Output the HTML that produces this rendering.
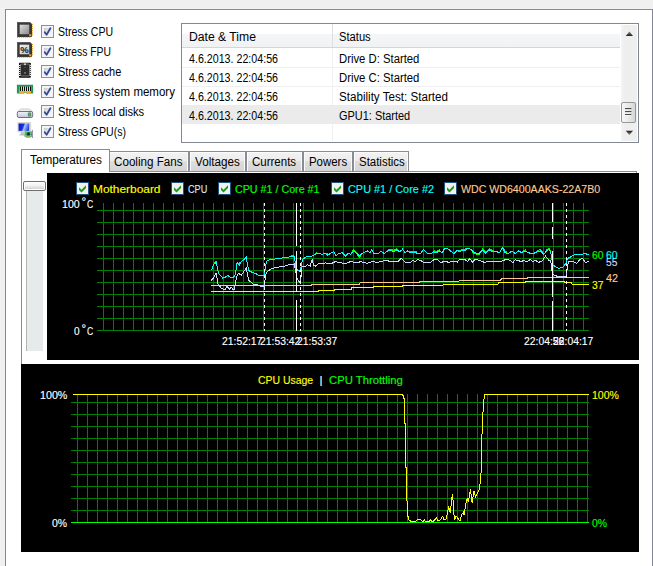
<!DOCTYPE html>
<html><head><meta charset="utf-8"><title>System Stability Test</title>
<style>
html,body{margin:0;padding:0}
body{width:653px;height:566px;overflow:hidden;background:#f0f0f0;position:relative;font-family:"Liberation Sans", sans-serif;font-size:12px}
.abs{position:absolute;display:block}
.t{position:absolute;white-space:pre;line-height:12px;transform-origin:0 0;display:block}
.panel{position:absolute;left:5px;top:9px;width:646px;height:600px;background:#fff;border:1px solid #848894}
.hl{position:absolute;left:0;top:8px;width:653px;height:1px;background:#f4f4f4}
.cb{position:absolute;width:11px;height:11px;border:1px solid #8e8f8f;background:#f4f4f4;box-shadow:inset 0 0 0 1px #f4f4f4}
.cb:before{content:"";position:absolute;left:2px;top:2px;width:7px;height:7px;background:linear-gradient(135deg,#c6cacf,#e6e8eb 55%,#f8f8f8);}
.cb svg{position:absolute;left:-1px;top:-1px}
.ccb{position:absolute;width:11px;height:11px;border:1px solid #1c5180;background:#f1f1ed}
.ccb svg{position:absolute;left:-1px;top:-1px}
.list{position:absolute;left:181px;top:23px;width:456px;height:118px;border:1px solid #828790;background:#fff}
.hdr{position:absolute;left:182px;top:24px;width:438px;height:23px;background:linear-gradient(#fff 0,#fff 42%,#f5f6f8 43%,#f1f2f4 100%);border-bottom:1px solid #d5d5d5}
.tab{position:absolute;top:151px;height:19px;border:1px solid #898c95;border-bottom:none;box-shadow:inset 1px 1px 0 #fbfbfb,inset -1px 0 0 #fbfbfb;background:linear-gradient(#f3f3f3 0,#ececec 47%,#dedede 48%,#d5d5d5 100%)}
</style></head><body>
<div class="hl"></div>
<div class="panel"></div>
<svg class="abs" style="left:17px;top:22px" width="17" height="17" viewBox="0 0 17 17"><defs><linearGradient id="cg0" x1="0" y1="0" x2="1" y2="1"><stop offset="0" stop-color="#dedede"/><stop offset="1" stop-color="#8a8a8a"/></linearGradient></defs><path d="M0 0H13L14.8 1.8V14.8H0z" fill="#3a3a3a"/><path d="M0.5 14.8V0.5H13" stroke="#5c5c5c" stroke-width="1" fill="none"/><path d="M14.3 2.2V14.3H0.8" stroke="#242424" stroke-width="1" fill="none"/><rect x="2.7" y="2.7" width="9.5" height="9.5" fill="url(#cg0)"/><rect x="12.2" y="12.2" width="2.1" height="2.1" fill="#f0a020"/><path d="M14.8 2.4h1.2M14.8 4.6h1.2M14.8 6.7h1.2M14.8 8.8h1.2M14.8 10.9h1.2M14.8 12.9h1.2" stroke="#d89418" stroke-width="1"/><path d="M0.6 14.8v1.1M2.7 14.8v1.1M4.8 14.8v1.1M6.8 14.8v1.1M8.8 14.8v1.1M10.8 14.8v1.1M12.9 14.8v1.1" stroke="#d89418" stroke-width="1"/></svg><svg class="abs" style="left:17px;top:42px" width="17" height="17" viewBox="0 0 17 17"><defs><linearGradient id="cg1" x1="0" y1="0" x2="1" y2="1"><stop offset="0" stop-color="#f4f4f4"/><stop offset="1" stop-color="#c4c4c4"/></linearGradient></defs><path d="M0 0H13L14.8 1.8V14.8H0z" fill="#3a3a3a"/><path d="M0.5 14.8V0.5H13" stroke="#5c5c5c" stroke-width="1" fill="none"/><path d="M14.3 2.2V14.3H0.8" stroke="#242424" stroke-width="1" fill="none"/><rect x="2.7" y="2.7" width="9.5" height="9.5" fill="url(#cg1)"/><rect x="12.2" y="12.2" width="2.1" height="2.1" fill="#f0a020"/><path d="M14.8 2.4h1.2M14.8 4.6h1.2M14.8 6.7h1.2M14.8 8.8h1.2M14.8 10.9h1.2M14.8 12.9h1.2" stroke="#d89418" stroke-width="1"/><path d="M0.6 14.8v1.1M2.7 14.8v1.1M4.8 14.8v1.1M6.8 14.8v1.1M8.8 14.8v1.1M10.8 14.8v1.1M12.9 14.8v1.1" stroke="#d89418" stroke-width="1"/><text x="7.4" y="11" font-family="Liberation Sans, sans-serif" font-size="9.5" font-weight="bold" text-anchor="middle" fill="#111">%</text></svg><svg class="abs" style="left:17px;top:62px" width="16" height="17" viewBox="0 0 16 17"><rect x="2" y="0.8" width="11.8" height="15" rx="0.8" fill="#0c0c0c"/><path d="M0.9 3.5H15M0.9 5.5H15M0.9 7.5H15M0.9 9.5H15M0.9 11.5H15M0.9 13.5H15" stroke="#e6ecf8" stroke-width="1"/><rect x="3.4" y="2" width="9.2" height="12" rx="0.6" fill="#2c2c2c" stroke="#a4a4a4" stroke-width="0.7"/><circle cx="8" cy="2.2" r="1" fill="#d8d8d8"/><rect x="7.3" y="5" width="1.4" height="1" fill="#555"/><rect x="7.2" y="10" width="1.7" height="1.7" fill="#7c7c7c"/></svg><svg class="abs" style="left:16px;top:84px" width="18" height="10" viewBox="0 0 18 10"><path d="M0.9 0.8H17.1V9.6H10.4L9.9 8.6H8.7L8.2 9.6H0.9z" fill="#1f9c50"/><rect x="3.6" y="2.6" width="11.6" height="4.6" fill="#e8f2ea"/><path d="M4.5 2.4v4.8M6.5 2.4v4.8M8.5 2.4v4.8M10.5 2.4v4.8M12.5 2.4v4.8M14.5 2.4v4.8" stroke="#0c0c0c" stroke-width="1.1"/><path d="M3.2 7H15V8.9H10.6L10 7.9H8.6L8 8.9H3.2z" fill="#f2b01c"/></svg><svg class="abs" style="left:16px;top:108px" width="18" height="11" viewBox="0 0 18 11"><defs><linearGradient id="dg" x1="0" y1="0" x2="0" y2="1"><stop offset="0" stop-color="#f4f4fb"/><stop offset="1" stop-color="#c2c4dc"/></linearGradient></defs><path d="M5.2 0.9H12.8Q14.6 1.1 16.3 3.8H1.7Q3.4 1.1 5.2 0.9z" fill="#ececf0" stroke="#b8bac0" stroke-width="0.6"/><rect x="1.3" y="3.5" width="15.4" height="6" rx="1.6" fill="url(#dg)" stroke="#62666e" stroke-width="0.9"/><rect x="11.9" y="4.4" width="3.3" height="4.2" rx="0.8" fill="#686c74"/><rect x="12.4" y="4.9" width="2.1" height="3.2" fill="#2ecc2e"/></svg><svg class="abs" style="left:17px;top:122px" width="17" height="17" viewBox="0 0 17 17"><defs><linearGradient id="mg" x1="0" y1="0" x2="1" y2="0.25"><stop offset="0" stop-color="#0010d0"/><stop offset="0.5" stop-color="#1838e0"/><stop offset="0.62" stop-color="#b0c4f8"/><stop offset="0.8" stop-color="#7090f0"/><stop offset="1" stop-color="#2850e0"/></linearGradient></defs><rect x="0.4" y="0.1" width="13.8" height="10.2" rx="0.6" fill="#dcd8cc"/><rect x="1.6" y="1.5" width="10.6" height="7.4" fill="url(#mg)"/><path d="M3.6 10.3h3.4v2.2h1v1.1H2.4v-1.1h1.2z" fill="#c0beb6"/><rect x="7.6" y="9.6" width="7.3" height="5.1" fill="#1e9850"/><rect x="10.4" y="10.8" width="2.2" height="2.2" fill="#181818"/><path d="M8.4 10.6h1v1h-1zM8.4 12.8h1v1h-1zM13.2 10.6h1v1h-1zM13.2 12.8h1v1h-1z" fill="#e8f4ea"/><path d="M9 14.7h4.6v1.3H9z" fill="#f2b01c"/><path d="M15.4 7.9V16" stroke="#7a8088" stroke-width="0.9"/></svg>
<div class="cb" style="left:41px;top:25px"><svg width="13" height="13" viewBox="0 0 13 13"><path d="M3.7 7.2L5.6 9.7L9.4 3.3" stroke="#36489a" stroke-width="1.8" fill="none" stroke-linecap="round" stroke-linejoin="round"/></svg></div>
<div class="cb" style="left:41px;top:45px"><svg width="13" height="13" viewBox="0 0 13 13"><path d="M3.7 7.2L5.6 9.7L9.4 3.3" stroke="#36489a" stroke-width="1.8" fill="none" stroke-linecap="round" stroke-linejoin="round"/></svg></div>
<div class="cb" style="left:41px;top:65px"><svg width="13" height="13" viewBox="0 0 13 13"><path d="M3.7 7.2L5.6 9.7L9.4 3.3" stroke="#36489a" stroke-width="1.8" fill="none" stroke-linecap="round" stroke-linejoin="round"/></svg></div>
<div class="cb" style="left:41px;top:85px"><svg width="13" height="13" viewBox="0 0 13 13"><path d="M3.7 7.2L5.6 9.7L9.4 3.3" stroke="#36489a" stroke-width="1.8" fill="none" stroke-linecap="round" stroke-linejoin="round"/></svg></div>
<div class="cb" style="left:41px;top:105px"><svg width="13" height="13" viewBox="0 0 13 13"><path d="M3.7 7.2L5.6 9.7L9.4 3.3" stroke="#36489a" stroke-width="1.8" fill="none" stroke-linecap="round" stroke-linejoin="round"/></svg></div>
<div class="cb" style="left:41px;top:125px"><svg width="13" height="13" viewBox="0 0 13 13"><path d="M3.7 7.2L5.6 9.7L9.4 3.3" stroke="#36489a" stroke-width="1.8" fill="none" stroke-linecap="round" stroke-linejoin="round"/></svg></div>
<div class="list"></div><div class="hdr"></div>
<div class="abs" style="left:332px;top:24px;width:1px;height:23px;background:#dedfe1"></div>
<div class="abs" style="left:332px;top:48px;width:1px;height:93px;background:#f0f0f0"></div>
<div class="abs" style="left:182px;top:105px;width:438px;height:19px;background:#ebebeb"></div>
<div class="abs" style="left:182px;top:67px;width:438px;height:1px;background:#efefef"></div>
<div class="abs" style="left:182px;top:86px;width:438px;height:1px;background:#efefef"></div>
<div class="abs" style="left:621px;top:25px;width:16px;height:116px;background:linear-gradient(90deg,#f4f4f4,#eeeeee 25%,#efefef)"></div>
<svg class="abs" style="left:621px;top:24px" width="17" height="118" viewBox="0 0 17 118"><defs><linearGradient id="ag" x1="0" y1="0" x2="0" y2="1"><stop offset="0" stop-color="#8a8a8a"/><stop offset="1" stop-color="#1c1c1c"/></linearGradient><linearGradient id="ag2" x1="0" y1="0" x2="0" y2="1"><stop offset="0" stop-color="#1c1c1c"/><stop offset="1" stop-color="#8a8a8a"/></linearGradient></defs><path d="M4.8 12L8.4 7.6L12 12z" fill="url(#ag)"/><path d="M4.8 106.8L8.4 111L12 106.8z" fill="url(#ag2)"/></svg>
<div class="abs" style="left:621px;top:102px;width:13px;height:19px;border:1px solid #979797;border-radius:2px;background:linear-gradient(90deg,#f6f6f6,#e9e9e9 50%,#d6d6d6)"></div>
<svg class="abs" style="left:624px;top:107px" width="9" height="9" viewBox="0 0 9 9"><path d="M1 1.7H7.4M1 4.6H7.4M1 7.5H7.4" stroke="#4a4a4a" stroke-width="1.2"/><path d="M1 2.7H7.4M1 5.6H7.4M1 8.5H7.4" stroke="#fafafa" stroke-width="0.8" opacity="0.7"/></svg>
<div class="abs" style="left:21px;top:171px;width:615px;height:193px;border-left:1px solid #898c95;border-top:1px solid #898c95"></div>
<div class="abs" style="left:636px;top:171px;width:1px;height:2px;background:#898c95"></div>
<div class="tab" style="left:108px;width:79px"></div>
<div class="tab" style="left:189px;width:55px"></div>
<div class="tab" style="left:246px;width:55px"></div>
<div class="tab" style="left:303px;width:48px"></div>
<div class="tab" style="left:353px;width:54px"></div>
<div class="abs" style="left:21px;top:149px;width:87px;height:22px;border:1px solid #898c95;border-bottom:none;background:#fff"></div>
<div class="abs" style="left:26px;top:185px;width:16px;height:166px;background:#e7eaea;border-left:1px solid #b4b4b4"></div>
<div class="abs" style="left:23px;top:181px;width:21px;height:8px;border:1px solid #707070;border-radius:2px;background:linear-gradient(#fdfdfd 0,#f2f2f2 45%,#d8d8d8 80%,#e2e2e2 100%);box-shadow:inset 0 0 0 1px #fff"></div>
<svg class="abs" style="left:47px;top:173px" width="592" height="187" viewBox="47 173 592 187"><rect x="47" y="173" width="592" height="187" fill="#000"/><g stroke="#008000" stroke-width="1" shape-rendering="crispEdges"><path d="M103.5 203V331M113.5 203V331M123.5 203V331M133.5 203V331M143.5 203V331M153.5 203V331M163.5 203V331M173.5 203V331M183.5 203V331M193.5 203V331M203.5 203V331M213.5 203V331M223.5 203V331M233.5 203V331M243.5 203V331M253.5 203V331M263.5 203V331M273.5 203V331M283.5 203V331M293.5 203V331M303.5 203V331M313.5 203V331M323.5 203V331M333.5 203V331M343.5 203V331M353.5 203V331M363.5 203V331M373.5 203V331M383.5 203V331M393.5 203V331M403.5 203V331M413.5 203V331M423.5 203V331M433.5 203V331M443.5 203V331M453.5 203V331M463.5 203V331M473.5 203V331M483.5 203V331M493.5 203V331M503.5 203V331M513.5 203V331M523.5 203V331M533.5 203V331M543.5 203V331M553.5 203V331M563.5 203V331M573.5 203V331M583.5 203V331M97 210.5H589M97 222.5H589M97 234.5H589M97 246.5H589M97 258.5H589M97 270.5H589M97 282.5H589M97 294.5H589M97 306.5H589M97 318.5H589M97 330.5H589" fill="none"/></g><g shape-rendering="crispEdges"><polyline points="211.3,291.4 318.5,291.4 319.0,290.3 334.5,290.3 335.0,289.2 351.4,289.2 352.0,287.6 373.3,287.6 374.0,286.4 402.0,286.4 402.8,285.3 443.0,285.3 443.5,284.4 497.7,284.4 498.5,282.7 525.3,282.7 526.1,281.3 563.2,281.3 564.9,282.2 570.8,282.2 572.4,284.4 588.8,284.4" stroke="#ffff00" stroke-width="1" fill="none"/><polyline points="211.3,285.5 311.0,285.5 311.5,284.4 359.0,284.4 360.0,282.7 419.4,282.7 420.0,281.3 459.0,281.3 459.5,280.5 500.5,280.5 501.7,278.5 527.0,278.5 527.8,277.1 588.8,277.1" stroke="#ffc890" stroke-width="1" fill="none"/><polyline points="211.3,280.5 213.5,278.0 216.0,273.4 217.2,278.8 218.2,285.5 219.9,286.4 221.9,288.9 225.3,289.2 227.0,286.4 229.5,289.2 231.2,287.2 232.8,289.2 234.5,289.2 235.4,282.2 237.1,275.4 238.7,273.4 241.3,275.4 244.1,271.2 246.3,267.8 247.5,275.4 248.9,280.5 251.4,282.2 253.9,284.7 257.3,284.7 260.6,286.4 264.5,286.4 265.4,275.4 267.4,271.2 272.4,268.4 277.5,267.3 284.2,266.2 289.3,264.5 294.3,264.0 295.7,271.2 296.9,278.0 299.4,282.2 300.8,278.8 302.0,266.2 305.1,267.0 307.6,264.5 310.1,266.2 312.1,259.4 313.5,265.3 316.0,266.2 318.5,263.6 321.9,264.0 325.3,262.8 330.3,264.0 335.4,261.6 340.4,262.8 345.5,263.6 350.5,261.6 357.3,262.8 360.6,261.6 367.4,263.3 372.4,261.6 377.5,262.3 382.5,261.1 387.6,260.3 389.3,262.0 394.3,261.1 397.7,262.0 401.1,258.6 402.5,259.4 405.1,262.0 410.1,262.8 412.6,260.3 415.2,262.0 417.7,259.4 420.2,260.3 423.6,262.3 430.3,262.3 433.7,259.9 437.9,259.9 440.4,262.3 445.5,261.6 448.9,262.3 453.9,261.1 457.3,262.0 459.0,259.9 464.9,259.4 467.4,261.6 469.9,258.6 472.4,262.3 475.0,259.4 479.2,260.3 484.2,262.3 491.0,261.1 494.3,262.0 499.4,261.1 500.0,262.0 503.4,260.3 506.7,259.4 510.1,260.3 512.6,262.8 515.2,259.9 518.5,260.3 521.1,262.0 523.6,260.3 527.0,262.0 530.3,259.4 532.8,262.0 535.4,260.3 538.7,262.3 542.1,261.1 545.5,256.1 548.9,260.3 550.9,261.1 551.5,268.7 553.1,274.6 557.3,276.3 560.6,276.8 566.5,276.8 567.4,265.3 569.1,261.1 574.1,262.0 576.6,263.6 580.0,259.4 582.5,258.6 585.9,262.8 588.8,261.1" stroke="#c8dcff" stroke-width="1" fill="none"/><polyline points="211.3,270.4 212.3,268.0 213.3,265.7 214.3,263.3 215.3,261.8 216.3,261.6 217.5,268.7 218.9,274.1 220.0,275.0 221.1,275.9 221.9,276.9 222.7,278.0 223.6,277.7 224.4,277.4 225.3,277.1 226.1,276.6 227.0,276.0 227.8,275.4 228.6,276.1 229.5,276.8 230.3,277.5 231.4,277.3 232.6,277.2 233.7,277.1 234.5,275.8 235.4,274.6 236.2,268.7 237.1,262.8 238.1,262.9 239.1,264.1 239.9,262.4 240.8,262.0 241.9,261.1 243.0,260.3 244.1,259.4 245.2,258.3 246.3,257.2 247.5,264.5 248.9,270.7 250.0,271.3 251.1,271.8 252.2,272.4 253.3,272.7 254.5,273.1 255.6,273.4 256.7,274.1 257.8,274.8 259.0,275.4 259.9,275.4 260.8,275.4 261.7,275.4 262.7,275.4 263.6,275.4 264.5,275.4 265.4,265.3 266.4,262.8 267.4,260.3 268.3,260.1 269.3,259.9 270.3,259.8 271.2,259.6 272.2,259.4 273.2,259.3 274.1,259.1 275.1,259.0 276.1,258.8 277.2,258.7 278.2,258.5 279.2,258.4 280.2,258.3 281.2,258.1 282.2,258.0 283.2,257.9 284.2,257.7 285.2,257.6 286.1,257.4 287.1,257.3 288.0,257.2 289.0,257.0 289.9,256.9 290.9,256.7 291.8,255.6 292.6,255.4 293.5,255.2 294.3,256.1 295.2,262.4 296.0,268.7 296.9,269.5 297.7,270.4 298.5,270.8 299.4,271.2 300.8,268.7 301.7,264.1 302.5,259.4 303.6,258.7 304.6,258.0 305.7,257.3 306.7,256.6 307.7,256.5 308.8,256.4 309.8,256.3 310.8,256.2 311.8,256.1 312.9,255.5 314.0,254.9 315.2,254.4 316.3,252.8 317.4,253.6 318.5,253.2 319.7,253.6 320.8,254.0 321.9,254.4 323.0,254.1 324.1,253.8 325.3,253.5 326.1,253.1 327.0,253.7 327.8,254.2 328.9,254.4 330.0,253.5 331.2,252.7 332.0,252.4 332.8,252.1 333.7,251.8 334.5,253.2 335.4,254.7 336.2,256.1 337.1,255.2 337.9,254.4 338.7,253.5 339.9,253.2 341.0,253.0 342.1,252.7 343.2,253.8 344.4,254.9 345.5,256.1 346.3,255.1 347.2,254.1 348.0,253.2 348.9,253.6 349.7,254.0 350.5,254.4 351.7,253.2 352.8,250.9 353.9,249.8 355.0,250.8 356.2,252.9 357.3,253.9 358.1,255.8 359.0,256.5 359.8,257.3 360.6,255.1 361.5,254.1 362.3,253.2 363.3,252.8 364.3,252.3 365.4,251.9 366.4,251.4 367.4,251.0 368.2,251.6 369.1,252.1 369.9,252.7 370.8,251.3 371.6,249.8 372.4,251.1 373.3,252.3 374.1,253.5 375.2,253.5 376.2,253.5 377.3,253.5 378.3,253.5 379.2,252.7 380.0,251.8 380.9,251.0 382.0,251.8 383.1,252.7 384.2,253.5 385.3,252.7 386.5,251.8 387.6,251.0 388.7,249.5 389.8,249.2 391.0,249.0 391.8,249.5 392.6,250.1 393.5,250.6 394.6,250.0 395.7,249.3 396.9,248.6 397.7,250.5 398.5,251.2 399.4,251.8 400.2,251.3 401.1,250.7 401.9,250.2 402.5,249.3 403.4,250.4 404.2,251.6 405.1,252.7 405.9,252.1 406.7,251.6 407.6,251.0 408.4,251.6 409.3,252.1 410.1,251.7 411.1,251.7 412.1,251.7 413.1,251.7 414.2,251.7 415.2,251.7 416.2,251.9 417.2,253.2 418.2,253.4 419.2,253.6 420.2,253.9 421.3,252.4 422.5,250.8 423.6,249.3 424.7,250.6 425.8,251.9 427.0,253.2 428.1,253.4 429.2,253.6 430.3,253.9 431.4,253.2 432.6,252.5 433.7,251.8 434.5,250.9 435.4,251.2 436.2,251.5 437.3,250.9 438.5,250.4 439.6,249.8 440.4,251.7 441.3,252.5 442.1,253.2 443.0,251.6 443.8,250.0 444.6,248.5 445.5,248.4 446.3,248.3 447.2,248.1 448.3,249.1 449.4,250.0 450.5,251.0 451.7,251.8 452.8,252.7 453.9,253.5 455.0,252.4 456.2,251.3 457.3,250.2 458.1,250.7 459.0,251.3 459.8,250.6 460.6,250.1 461.5,249.5 462.3,249.0 463.2,249.2 464.0,249.5 464.9,249.8 465.7,248.8 466.5,249.1 467.4,248.1 468.5,248.5 469.6,248.9 470.8,249.3 471.9,250.4 473.0,252.6 474.1,253.7 475.1,253.9 476.1,254.0 477.2,254.2 478.2,254.4 479.2,254.5 480.3,252.4 481.4,251.3 482.5,249.0 483.7,250.0 484.8,251.0 485.9,252.0 487.0,250.9 488.2,249.7 489.3,248.6 490.4,249.3 491.5,250.0 492.6,250.6 493.7,250.6 494.8,251.8 495.8,251.8 496.9,251.8 497.7,252.1 498.5,252.4 499.4,252.7 500.0,251.8 500.8,250.4 501.7,249.0 502.5,247.6 503.4,249.3 504.2,249.8 505.1,251.5 506.2,251.8 507.3,253.2 508.4,253.5 509.5,252.7 510.7,251.8 511.8,251.0 512.9,251.8 514.0,252.7 515.2,253.5 516.3,252.7 517.4,251.8 518.5,251.0 519.7,251.6 520.8,252.1 521.9,252.7 523.0,251.1 524.1,250.6 525.3,250.0 526.4,251.6 527.5,252.1 528.6,252.7 529.8,253.1 530.9,253.5 532.0,253.9 533.1,253.5 534.3,253.1 535.4,252.7 536.4,252.4 537.4,250.5 538.4,250.2 539.4,249.8 540.4,249.5 541.6,250.6 542.7,253.2 543.8,254.4 544.6,253.2 545.5,252.1 546.3,250.0 547.2,249.4 548.0,248.9 548.9,248.3 549.7,249.6 550.5,251.8 551.4,256.1 552.6,264.5 553.6,265.3 554.6,266.2 555.6,267.0 556.7,267.5 557.8,267.9 559.0,268.4 560.0,268.0 561.1,267.7 562.1,267.3 563.2,267.0 564.0,265.9 564.9,264.8 565.7,263.6 566.5,261.1 567.4,258.6 568.5,258.0 569.6,257.5 570.8,256.9 571.9,256.2 573.0,255.6 574.1,254.9 575.2,254.9 576.2,254.9 577.3,254.9 578.3,254.9 579.4,254.9 580.4,254.9 581.5,254.9 582.5,254.9 583.4,253.5 584.5,253.7 585.5,253.9 586.6,254.0 587.7,254.2 588.8,254.4" stroke="#00ff00" stroke-width="1" fill="none"/><polyline points="211.3,270.4 214.3,263.3 216.3,262.8 217.5,268.7 218.9,274.1 221.1,275.9 222.7,278.0 225.3,277.1 227.8,275.4 230.3,277.5 233.7,277.1 235.4,274.6 237.1,262.8 239.1,265.3 240.8,262.0 244.1,259.4 246.3,257.2 247.5,264.5 248.9,270.7 252.2,272.4 255.6,273.4 259.0,275.4 264.5,275.4 265.4,265.3 267.4,260.3 274.1,259.1 284.2,257.7 291.8,256.6 294.3,256.1 296.0,268.7 297.7,270.4 299.4,271.2 300.8,268.7 302.5,259.4 306.7,256.6 311.8,256.1 315.2,254.4 318.5,253.2 321.9,254.4 325.3,253.5 327.8,255.2 331.2,252.7 333.7,251.8 336.2,256.1 338.7,253.5 342.1,252.7 345.5,256.1 348.0,253.2 350.5,254.4 353.9,251.0 357.3,253.9 359.8,256.1 362.3,253.2 367.4,251.0 369.9,252.7 371.6,249.8 374.1,253.5 378.3,253.5 380.9,251.0 384.2,253.5 387.6,251.0 391.0,250.2 393.5,251.8 396.9,249.8 399.4,251.8 401.9,250.2 402.5,249.3 405.1,252.7 407.6,251.0 410.1,252.7 415.2,252.7 420.2,253.9 423.6,249.3 427.0,253.2 430.3,253.9 433.7,251.8 436.2,252.7 439.6,251.0 442.1,253.2 444.6,248.5 447.2,248.1 450.5,251.0 453.9,253.5 457.3,250.2 459.8,251.8 462.3,250.2 464.9,251.0 467.4,248.1 470.8,249.3 474.1,252.7 479.2,253.5 482.5,250.2 485.9,253.2 489.3,249.8 492.6,251.8 496.9,251.8 499.4,252.7 500.0,251.8 502.5,247.6 505.1,252.7 508.4,253.5 511.8,251.0 515.2,253.5 518.5,251.0 521.9,252.7 525.3,251.0 528.6,252.7 532.0,253.9 535.4,252.7 540.4,251.0 543.8,254.4 546.3,251.0 548.9,249.3 550.5,251.8 551.4,256.1 552.6,264.5 555.6,267.0 559.0,268.4 563.2,267.0 565.7,263.6 567.4,258.6 570.8,256.9 574.1,254.9 582.5,254.9 583.4,253.5 588.8,254.4" stroke="#00ffff" stroke-width="1" fill="none"/><path d="M264.5 203V331M300.5 203V331M566.5 203V331" stroke="#fff" stroke-dasharray="3 3" fill="none"/><path d="M296.5 203V246M296.5 251V292M296.5 300V331M552.5 203V222M552.5 227V239M552.5 251V297M552.5 301V331" stroke="#fff" fill="none"/></g></svg>
<div class="ccb" style="left:76px;top:182px"><svg width="13" height="13" viewBox="0 0 13 13"><path d="M3 5.2L5.5 7.8L10 3.2V6L5.5 10.6L3 8z" fill="#1a9a1a"/></svg></div>
<div class="ccb" style="left:171px;top:182px"><svg width="13" height="13" viewBox="0 0 13 13"><path d="M3 5.2L5.5 7.8L10 3.2V6L5.5 10.6L3 8z" fill="#1a9a1a"/></svg></div>
<div class="ccb" style="left:218px;top:182px"><svg width="13" height="13" viewBox="0 0 13 13"><path d="M3 5.2L5.5 7.8L10 3.2V6L5.5 10.6L3 8z" fill="#1a9a1a"/></svg></div>
<div class="ccb" style="left:331px;top:182px"><svg width="13" height="13" viewBox="0 0 13 13"><path d="M3 5.2L5.5 7.8L10 3.2V6L5.5 10.6L3 8z" fill="#1a9a1a"/></svg></div>
<div class="ccb" style="left:444px;top:182px"><svg width="13" height="13" viewBox="0 0 13 13"><path d="M3 5.2L5.5 7.8L10 3.2V6L5.5 10.6L3 8z" fill="#1a9a1a"/></svg></div>
<svg class="abs" style="left:21px;top:364px" width="618" height="188" viewBox="21 364 618 188"><rect x="21" y="364" width="618" height="188" fill="#000"/><g stroke="#008000" stroke-width="1" shape-rendering="crispEdges"><path d="M77.5 394V523M87.5 394V523M97.5 394V523M107.5 394V523M117.5 394V523M127.5 394V523M137.5 394V523M147.5 394V523M157.5 394V523M167.5 394V523M177.5 394V523M187.5 394V523M197.5 394V523M207.5 394V523M217.5 394V523M227.5 394V523M237.5 394V523M247.5 394V523M257.5 394V523M267.5 394V523M277.5 394V523M287.5 394V523M297.5 394V523M307.5 394V523M317.5 394V523M327.5 394V523M337.5 394V523M347.5 394V523M357.5 394V523M367.5 394V523M377.5 394V523M387.5 394V523M397.5 394V523M407.5 394V523M417.5 394V523M427.5 394V523M437.5 394V523M447.5 394V523M457.5 394V523M467.5 394V523M477.5 394V523M487.5 394V523M497.5 394V523M507.5 394V523M517.5 394V523M527.5 394V523M537.5 394V523M547.5 394V523M557.5 394V523M567.5 394V523M577.5 394V523M587.5 394V523M71 402.5H589M71 414.5H589M71 426.5H589M71 438.5H589M71 450.5H589M71 462.5H589M71 474.5H589M71 486.5H589M71 498.5H589M71 510.5H589M71 522.5H589" fill="none"/></g><g shape-rendering="crispEdges"><path d="M71 522.5H589" stroke="#00ff00" fill="none"/><polyline points="73.0,394.5 402.6,394.5 403.5,396.8 404.5,400.2 404.8,423.7 405.7,424.0 405.7,455.0 406.0,467.6 406.8,468.5 406.8,497.1 407.7,512.3 408.2,519.0 409.9,520.7 411.9,521.9 415.3,521.5 417.8,519.5 420.3,519.3 422.8,521.5 424.5,519.9 425.7,521.9 428.7,521.9 430.4,519.5 432.1,521.9 434.1,520.7 436.3,517.7 438.0,521.0 440.2,519.9 442.6,516.5 444.2,519.9 446.4,518.7 448.6,506.4 450.3,513.1 451.5,501.3 452.3,494.1 453.2,501.3 453.7,513.1 454.9,519.0 456.0,516.0 457.7,518.2 459.9,521.0 462.1,514.0 463.3,512.3 464.1,514.8 465.8,503.9 467.2,498.8 468.3,502.2 470.5,489.5 472.2,503.0 473.9,491.2 475.6,497.1 477.6,492.9 479.3,489.5 480.6,480.3 481.3,467.6 481.8,455.0 481.8,438.9 482.7,417.0 483.7,401.8 484.7,394.5 589.0,394.5" stroke="#ffff00" stroke-width="1" fill="none"/></g></svg>
<span class="t" style="left:57.5px;top:26px;color:#000;font-size:12px;transform:scaleX(0.8790);">Stress CPU</span>
<span class="t" style="left:57.5px;top:46px;color:#000;font-size:12px;transform:scaleX(0.8640);">Stress FPU</span>
<span class="t" style="left:57.5px;top:66px;color:#000;font-size:12px;transform:scaleX(0.9124);">Stress cache</span>
<span class="t" style="left:57.5px;top:86px;color:#000;font-size:12px;transform:scaleX(0.9581);">Stress system memory</span>
<span class="t" style="left:57.5px;top:106px;color:#000;font-size:12px;transform:scaleX(0.9298);">Stress local disks</span>
<span class="t" style="left:57.5px;top:126px;color:#000;font-size:12px;transform:scaleX(0.8792);">Stress GPU(s)</span>
<span class="t" style="left:189.2px;top:31px;color:#000;font-size:12px;transform:scaleX(1.0132);">Date &amp; Time</span>
<span class="t" style="left:339.3px;top:31px;color:#000;font-size:12px;transform:scaleX(0.9315);">Status</span>
<span class="t" style="left:189.2px;top:53px;color:#000;font-size:12px;transform:scaleX(0.8892);">4.6.2013. 22:04:56</span>
<span class="t" style="left:339.3px;top:53px;color:#000;font-size:12px;transform:scaleX(0.9419);">Drive D: Started</span>
<span class="t" style="left:189.2px;top:72px;color:#000;font-size:12px;transform:scaleX(0.8892);">4.6.2013. 22:04:56</span>
<span class="t" style="left:339.3px;top:72px;color:#000;font-size:12px;transform:scaleX(0.9419);">Drive C: Started</span>
<span class="t" style="left:189.2px;top:91px;color:#000;font-size:12px;transform:scaleX(0.8892);">4.6.2013. 22:04:56</span>
<span class="t" style="left:339.3px;top:91px;color:#000;font-size:12px;transform:scaleX(0.9680);">Stability Test: Started</span>
<span class="t" style="left:189.2px;top:110px;color:#000;font-size:12px;transform:scaleX(0.8892);">4.6.2013. 22:04:56</span>
<span class="t" style="left:339.3px;top:110px;color:#000;font-size:12px;transform:scaleX(0.9123);">GPU1: Started</span>
<span class="t" style="left:29.5px;top:154px;color:#000;font-size:12px;transform:scaleX(0.9813);">Temperatures</span>
<span class="t" style="left:114.2px;top:156px;color:#000;font-size:12px;transform:scaleX(0.9700);">Cooling Fans</span>
<span class="t" style="left:194.8px;top:156px;color:#000;font-size:12px;transform:scaleX(0.9729);">Voltages</span>
<span class="t" style="left:252.4px;top:156px;color:#000;font-size:12px;transform:scaleX(0.9584);">Currents</span>
<span class="t" style="left:308.9px;top:156px;color:#000;font-size:12px;transform:scaleX(0.9521);">Powers</span>
<span class="t" style="left:359.0px;top:156px;color:#000;font-size:12px;transform:scaleX(0.9539);">Statistics</span>
<span class="t" style="left:92.9px;top:183px;color:#ffff00;font-size:11.5px;transform:scaleX(1.0350);-webkit-text-stroke:0.15px #ffff00;">Motherboard</span>
<span class="t" style="left:187.5px;top:183px;color:#d8e8ff;font-size:11.5px;transform:scaleX(0.7949);-webkit-text-stroke:0.15px #d8e8ff;">CPU</span>
<span class="t" style="left:234.7px;top:183px;color:#00ff00;font-size:11.5px;transform:scaleX(0.9310);-webkit-text-stroke:0.15px #00ff00;">CPU #1 / Core #1</span>
<span class="t" style="left:347.7px;top:183px;color:#00ffff;font-size:11.5px;transform:scaleX(0.9475);-webkit-text-stroke:0.15px #00ffff;">CPU #1 / Core #2</span>
<span class="t" style="left:460.7px;top:183px;color:#ffc890;font-size:11.5px;transform:scaleX(0.9228);-webkit-text-stroke:0.15px #ffc890;">WDC WD6400AAKS-22A7B0</span>
<span class="t" style="left:61.9px;top:198px;color:#fff;font-size:11.5px;transform:scaleX(0.9225);-webkit-text-stroke:0.15px #fff;">100</span>
<span class="t" style="left:86.7px;top:198px;color:#fff;font-size:11.5px;transform:scaleX(0.7459);-webkit-text-stroke:0.15px #fff;">C</span>
<span class="t" style="left:81.4px;top:195px;color:#fff;font-size:11.5px;transform:scaleX(1.0000);-webkit-text-stroke:0.15px #fff;">°</span>
<span class="t" style="left:73.6px;top:325px;color:#fff;font-size:11.5px;transform:scaleX(0.8741);-webkit-text-stroke:0.15px #fff;">0</span>
<span class="t" style="left:86.7px;top:325px;color:#fff;font-size:11.5px;transform:scaleX(0.7459);-webkit-text-stroke:0.15px #fff;">C</span>
<span class="t" style="left:81.4px;top:322px;color:#fff;font-size:11.5px;transform:scaleX(1.0000);-webkit-text-stroke:0.15px #fff;">°</span>
<span class="t" style="left:222.4px;top:335px;color:#fff;font-size:11.5px;transform:scaleX(0.9002);-webkit-text-stroke:0.15px #fff;">21:52:17</span>
<span class="t" style="left:259.7px;top:335px;color:#fff;font-size:11.5px;transform:scaleX(0.9002);-webkit-text-stroke:0.15px #fff;">21:53:42</span>
<span class="t" style="left:296.8px;top:335px;color:#fff;font-size:11.5px;transform:scaleX(0.9002);-webkit-text-stroke:0.15px #fff;">21:53:37</span>
<span class="t" style="left:524.2px;top:335px;color:#fff;font-size:11.5px;transform:scaleX(0.9002);-webkit-text-stroke:0.15px #fff;">22:04:56</span>
<span class="t" style="left:553.0px;top:335px;color:#fff;font-size:11.5px;transform:scaleX(0.9002);-webkit-text-stroke:0.15px #fff;">22:04:17</span>
<span class="t" style="left:591.7px;top:249px;color:#00ff00;font-size:11.5px;transform:scaleX(0.8908);-webkit-text-stroke:0.15px #00ff00;">60</span>
<span class="t" style="left:606.0px;top:256px;color:#c8dcff;font-size:11.5px;transform:scaleX(0.8908);-webkit-text-stroke:0.15px #c8dcff;">55</span>
<span class="t" style="left:605.7px;top:249px;color:#00ffff;font-size:11.5px;transform:scaleX(0.9065);-webkit-text-stroke:0.15px #00ffff;">60</span>
<span class="t" style="left:606.0px;top:272px;color:#ffc890;font-size:11.5px;transform:scaleX(0.9377);-webkit-text-stroke:0.15px #ffc890;">42</span>
<span class="t" style="left:592.0px;top:279px;color:#ffff00;font-size:11.5px;transform:scaleX(0.8987);-webkit-text-stroke:0.15px #ffff00;">37</span>
<span class="t" style="left:257.9px;top:374px;color:#ffff00;font-size:11.5px;transform:scaleX(0.9075);-webkit-text-stroke:0.15px #ffff00;">CPU Usage</span>
<span class="t" style="left:319.5px;top:374px;color:#ffffff;font-size:11.5px;transform:scaleX(1.0000);-webkit-text-stroke:0.15px #ffffff;">|</span>
<span class="t" style="left:328.8px;top:374px;color:#00ff00;font-size:11.5px;transform:scaleX(0.9811);-webkit-text-stroke:0.15px #00ff00;">CPU Throttling</span>
<span class="t" style="left:39.6px;top:389px;color:#fff;font-size:11.5px;transform:scaleX(0.9313);-webkit-text-stroke:0.15px #fff;">100%</span>
<span class="t" style="left:51.9px;top:517px;color:#fff;font-size:11.5px;transform:scaleX(0.9083);-webkit-text-stroke:0.15px #fff;">0%</span>
<span class="t" style="left:592.1px;top:389px;color:#ffff00;font-size:11.5px;transform:scaleX(0.9143);-webkit-text-stroke:0.15px #ffff00;">100%</span>
<span class="t" style="left:592.1px;top:517px;color:#00ff00;font-size:11.5px;transform:scaleX(0.9083);-webkit-text-stroke:0.15px #00ff00;">0%</span>
</body></html>
